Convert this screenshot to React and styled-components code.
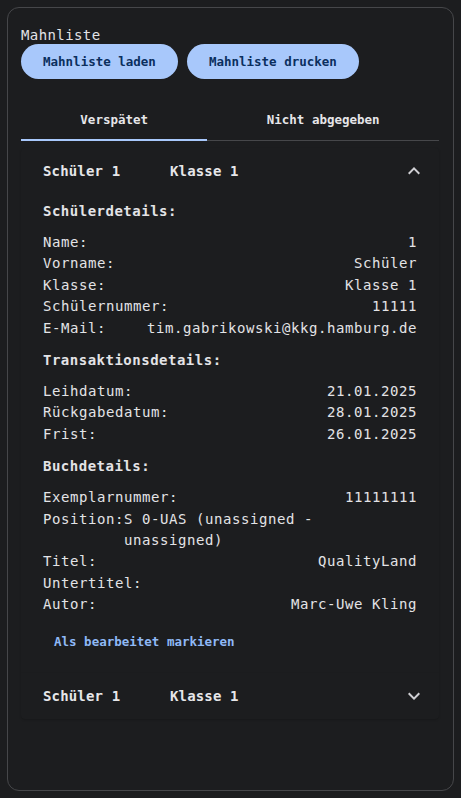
import React, { useState } from "react";
import styled, { createGlobalStyle } from "styled-components";

const GlobalStyle = createGlobalStyle`
  body {
    margin: 0;
    background: #1c1d1f;
    color: #e3e3e6;
    font-family: "DejaVu Sans Mono", "Liberation Mono", monospace;
  }
`;

const Page = styled.div`
  padding: 7px;
`;

const Card = styled.div`
  box-sizing: border-box;
  height: 784px;
  border: 1px solid #46474a;
  border-radius: 12px;
  padding: 19px 14px 0 13px;
`;

const Title = styled.div`
  font-size: 14px;
  line-height: 16px;
  letter-spacing: 0.4px;
  color: #e3e3e6;
`;

const ButtonRow = styled.div`
  display: flex;
  gap: 9px;
  margin-top: 1px;
`;

const PillButton = styled.button`
  height: 35px;
  padding: 0 22px;
  border: none;
  border-radius: 18px;
  background: #a8c8fb;
  color: #0b2f5e;
  font-family: inherit;
  font-size: 12.5px;
  font-weight: 600;
  letter-spacing: 0;
  cursor: pointer;
`;

const TabBar = styled.div`
  display: flex;
  margin-top: 18px;
  border-bottom: 1px solid #46474a;
`;

const Tab = styled.button`
  flex: 1 1 auto;
  height: 44px;
  padding: 0;
  border: none;
  background: none;
  color: #e6e6e9;
  font-family: inherit;
  font-size: 12.5px;
  font-weight: 600;
  box-shadow: ${(p) => (p.$active ? "inset 0 -2px 0 #a8c8fb" : "none")};
  margin-bottom: -1px;
  cursor: pointer;
`;

const List = styled.div`
  margin-top: 7px;
`;

const Panel = styled.div`
  background: #1c1d1f;
  box-shadow: 0 1px 2px 0 rgba(0, 0, 0, 0.18);
  &:first-child {
    border-top-left-radius: 4px;
    border-top-right-radius: 4px;
  }
  &:last-child {
    border-bottom-left-radius: 4px;
    border-bottom-right-radius: 4px;
  }
`;

const Summary = styled.div`
  display: flex;
  align-items: center;
  height: 46px;
  padding: 0 13px 0 22px;
  font-size: 14px;
  font-weight: 600;
  letter-spacing: 0.15px;
  color: #e6e6e9;
  cursor: pointer;
`;

const SummaryName = styled.span`
  width: 127px;
`;

const SummaryClass = styled.span`
  flex: 1;
`;

const Chevron = styled.svg`
  width: 24px;
  height: 24px;
  fill: #d0d0d4;
  transform: ${(p) => (p.$open ? "rotate(180deg)" : "none")};
`;

const Details = styled.div`
  padding: 7px 22px 13px;
`;

const SectionTitle = styled.div`
  font-size: 14px;
  line-height: 20px;
  font-weight: 600;
  letter-spacing: 0.5px;
  margin: ${(p) => (p.$first ? "0" : "11px")} 0 11px;
`;

const Row = styled.div`
  display: flex;
  justify-content: space-between;
  font-size: 14px;
  line-height: 21.4px;
  letter-spacing: 0.57px;
  color: #e3e3e6;
`;

const Label = styled.span`
  flex-shrink: 0;
`;

const Value = styled.span`
  text-align: left;
`;

const LinkButton = styled.button`
  display: block;
  height: 36px;
  margin-top: 8px;
  padding: 0 11px;
  border: none;
  background: none;
  color: #8fb9f6;
  font-family: inherit;
  font-size: 12.5px;
  font-weight: 600;
  cursor: pointer;
`;

const ExpandIcon = ({ open }) => (
  <Chevron $open={open} viewBox="0 0 24 24">
    <path d="M16.59 8.59 12 13.17 7.41 8.59 6 10l6 6 6-6z" />
  </Chevron>
);

const sections = [
  {
    title: "Schülerdetails:",
    rows: [
      ["Name:", "1"],
      ["Vorname:", "Schüler"],
      ["Klasse:", "Klasse 1"],
      ["Schülernummer:", "11111"],
      ["E-Mail:", "tim.gabrikowski@kkg.hamburg.de"],
    ],
  },
  {
    title: "Transaktionsdetails:",
    rows: [
      ["Leihdatum:", "21.01.2025"],
      ["Rückgabedatum:", "28.01.2025"],
      ["Frist:", "26.01.2025"],
    ],
  },
  {
    title: "Buchdetails:",
    rows: [
      ["Exemplarnummer:", "11111111"],
      ["Position:", "S 0-UAS (unassigned - unassigned)"],
      ["Titel:", "QualityLand"],
      ["Untertitel:", ""],
      ["Autor:", "Marc-Uwe Kling"],
    ],
  },
];

const StudentPanel = ({ initiallyOpen }) => {
  const [open, setOpen] = useState(initiallyOpen);
  return (
    <Panel>
      <Summary onClick={() => setOpen(!open)}>
        <SummaryName>Schüler 1</SummaryName>
        <SummaryClass>Klasse 1</SummaryClass>
        <ExpandIcon open={open} />
      </Summary>
      {open && (
        <Details>
          {sections.map((s, i) => (
            <div key={s.title}>
              <SectionTitle $first={i === 0}>{s.title}</SectionTitle>
              {s.rows.map(([label, value]) => (
                <Row key={label}>
                  <Label>{label}</Label>
                  <Value>{value}</Value>
                </Row>
              ))}
            </div>
          ))}
          <LinkButton>Als bearbeitet markieren</LinkButton>
        </Details>
      )}
    </Panel>
  );
};

export default function App() {
  const [tab, setTab] = useState(0);
  return (
    <Page>
      <GlobalStyle />
      <Card>
        <Title>Mahnliste</Title>
        <ButtonRow>
          <PillButton>Mahnliste laden</PillButton>
          <PillButton>Mahnliste drucken</PillButton>
        </ButtonRow>
        <TabBar>
          <Tab $active={tab === 0} onClick={() => setTab(0)}>
            Verspätet
          </Tab>
          <Tab $active={tab === 1} onClick={() => setTab(1)}>
            Nicht abgegeben
          </Tab>
        </TabBar>
        <List>
          <StudentPanel initiallyOpen />
          <StudentPanel initiallyOpen={false} />
        </List>
      </Card>
    </Page>
  );
}
